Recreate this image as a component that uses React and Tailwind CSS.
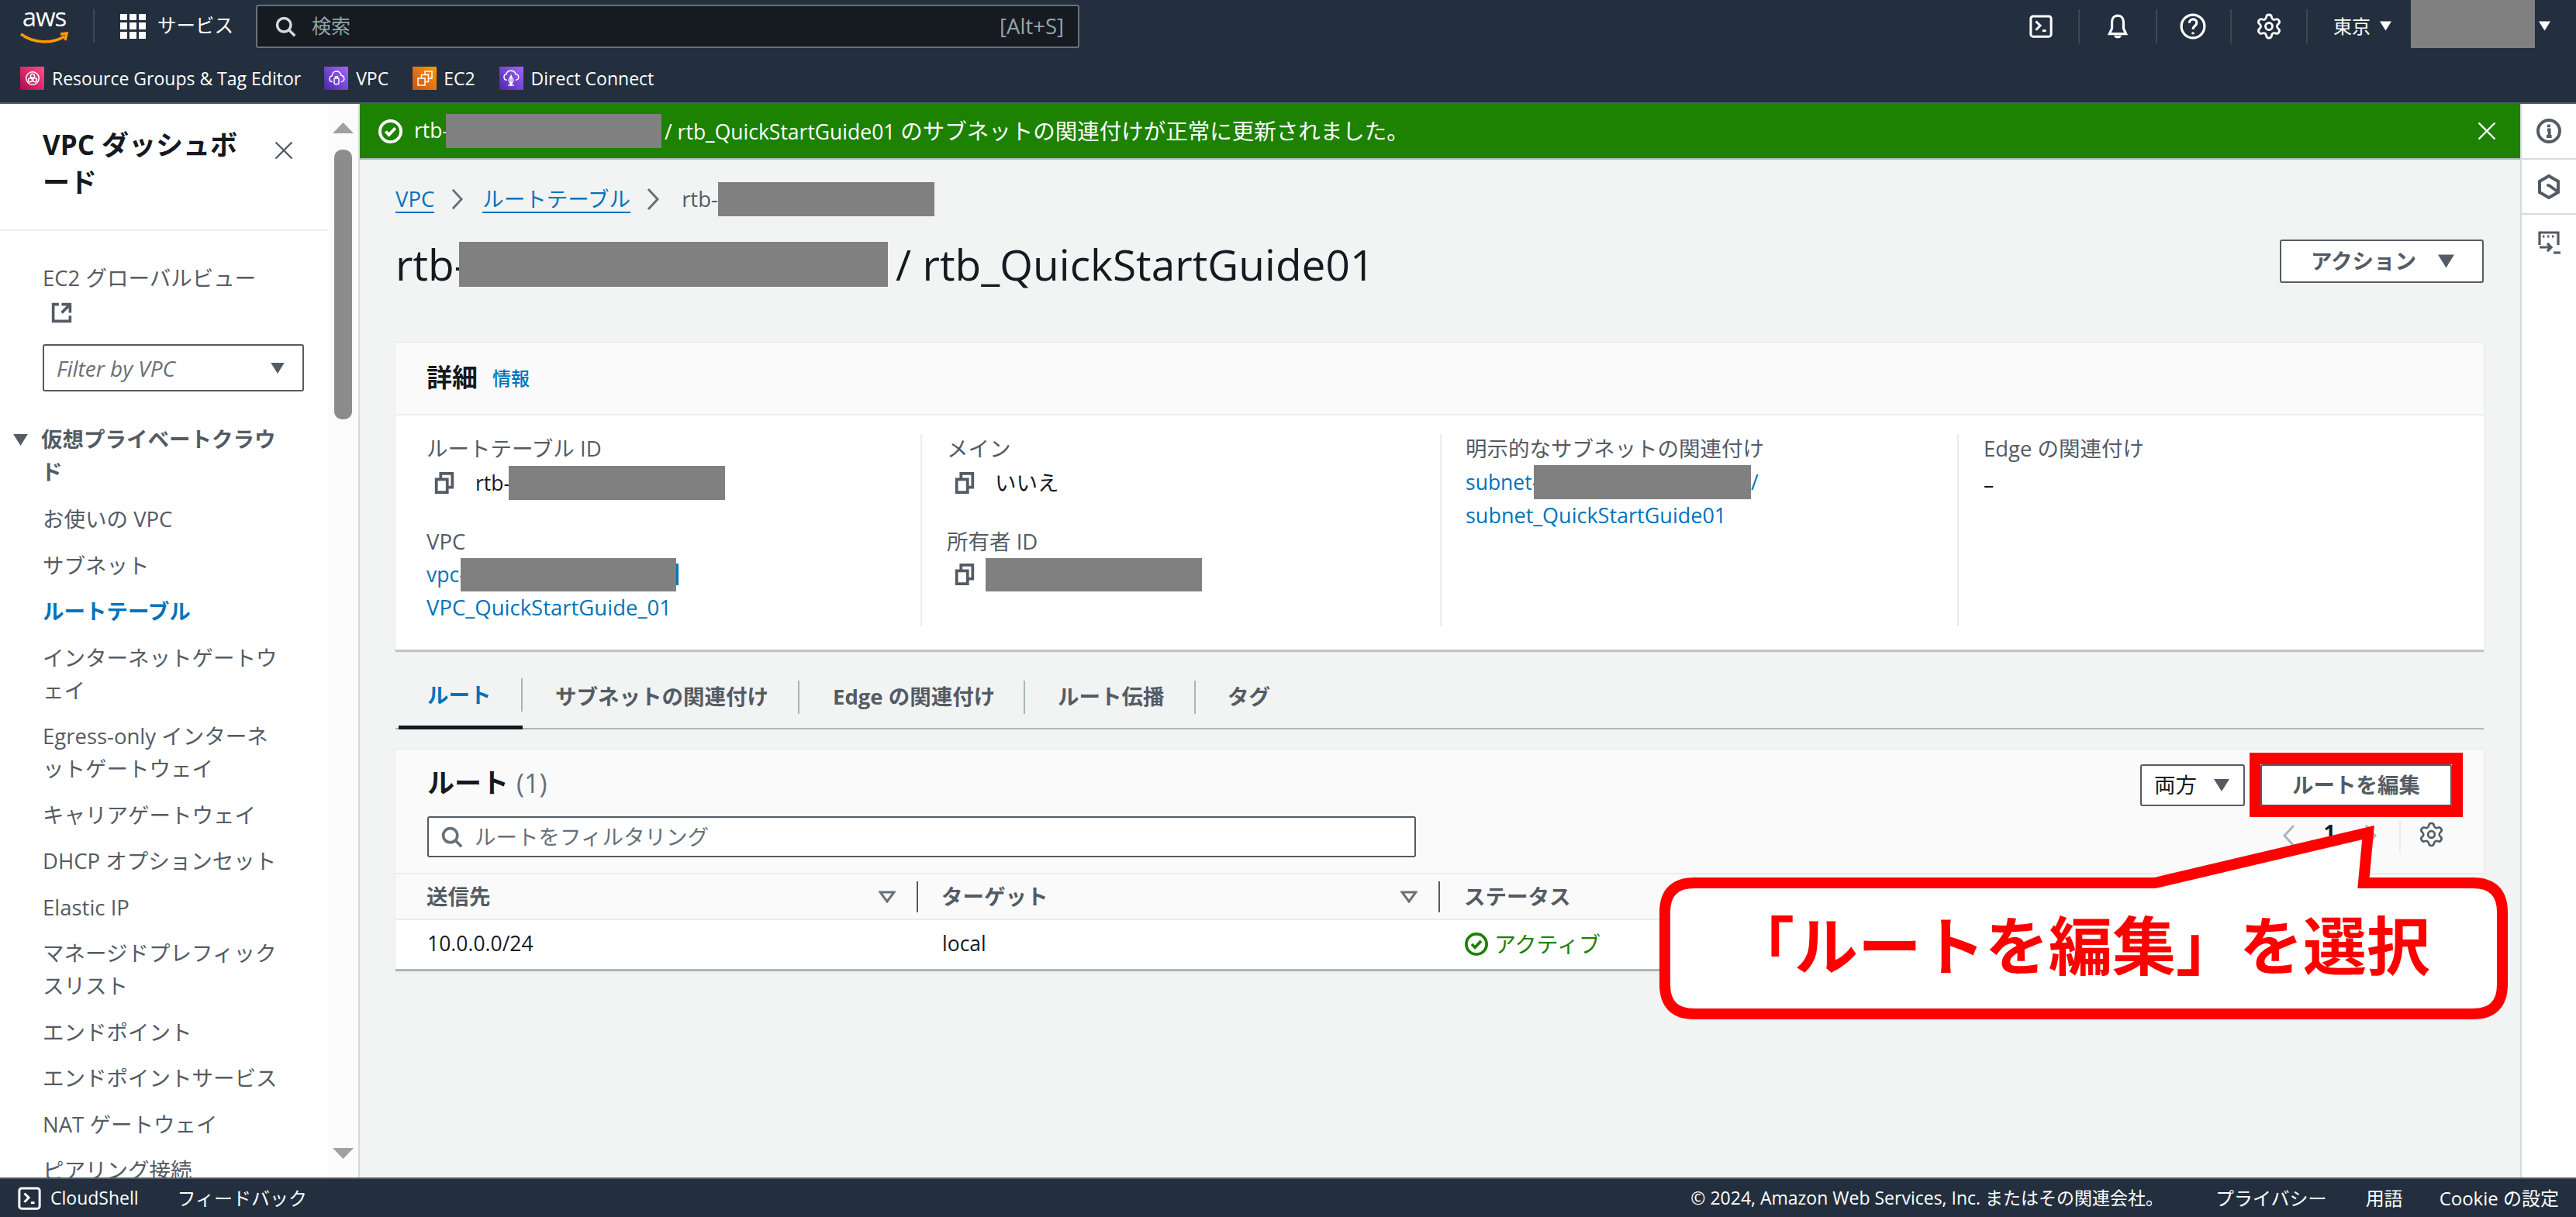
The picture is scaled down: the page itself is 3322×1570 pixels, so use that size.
import React from "react";
import { Settings } from "lucide-react";

const S = ({ c = "", w = 16, h, children, vb = "0 0 16 16", sw = 2 }) => (
  <svg viewBox={vb} width={w} height={h || w} className={"shrink-0 " + c} fill="none" stroke="currentColor" strokeWidth={sw}>
    {children}
  </svg>
);
const Grey = ({ w, h, c = "" }) => <span className={"inline-block shrink-0 bg-[#808080] " + c} style={{ width: w, height: h }} />;
const Tri = ({ w = 20, h = 16, c = "" }) => (
  <svg viewBox="0 0 20 16" width={w} height={h} className={"shrink-0 " + c} fill="currentColor"><path d="M0 0h20L10 16z" /></svg>
);
const Copy = ({ c = "" }) => (
  <S w={30} c={c}><path d="M2.5 5.5h7.5v9H2.5z" /><path d="M5.5 5V1.5h8v9.5H10.500" /></S>
);
const Term = ({ w = 30 }) => (
  <S w={w} sw={1.6}><rect x="1" y="1" width="14" height="14" rx="1.6" /><path d="m4.500 4.500 3 3-3 3" /><path d="M9 11h2.500" /></S>
);
const Check = ({ w = 30, sw = 2 }) => (
  <S w={w} sw={sw}><circle cx="8" cy="8" r="7" /><path d="m4.800 8 2.200 2.300 4.200-4.500" /></S>
);
const Search = ({ w = 30 }) => (
  <S w={w}><circle cx="7" cy="7" r="5" /><path d="m15 15-4.500-4.500" /></S>
);
const Close = ({ w = 28 }) => (
  <S w={w} sw={1.4}><path d="m2 2 12 12M14 2 2 14" /></S>
);
const Sort = () => (
  <svg viewBox="0 0 22 16" width="22" height="16" className="shrink-0 text-[#687078]" fill="none" stroke="currentColor" strokeWidth="3"><path d="M2 2h18L11 14z" /></svg>
);
const Chev = ({ w = 18, h = 30, c = "" }) => (
  <svg viewBox="0 0 18 30" width={w} height={h} className={"shrink-0 " + c} fill="none" stroke="currentColor" strokeWidth="3"><path d="m3 2 12 13L3 28" /></svg>
);
const HDiv = () => <span className="block h-[44px] w-[2px] shrink-0 bg-[#414750]" />;

const Fav = ({ bg, children, label, ml, gap }) => (
  <div className="flex items-center" style={{ marginLeft: ml }}>
    <span className="flex h-[30px] w-[31px] shrink-0 items-center justify-center text-white" style={{ background: bg }}>
      <S w={24} sw={1}>{children}</S>
    </span>
    <span className="whitespace-nowrap text-[23px] font-medium leading-none text-white" style={{ marginLeft: gap }}>{label}</span>
  </div>
);

const nav = [
  ["お使いの VPC"],
  ["サブネット"],
  ["ルートテーブル"],
  ["インターネットゲートウ", "ェイ"],
  ["Egress-only インターネ", "ットゲートウェイ"],
  ["キャリアゲートウェイ"],
  ["DHCP オプションセット"],
  ["Elastic IP"],
  ["マネージドプレフィック", "スリスト"],
  ["エンドポイント"],
  ["エンドポイントサービス"],
  ["NAT ゲートウェイ"],
  ["ピアリング接続"],
];

const Sidebar = () => (
  <aside className="flex h-full w-[464px] shrink-0 overflow-hidden border-r-2 border-[#d5dbdb] bg-white">
    <div className="h-full w-[423px] shrink-0 overflow-hidden text-[27.500px] leading-[42px] text-[#545b64]">
      <div className="flex h-[164px] items-start justify-between border-b-2 border-[#eaeded] pl-[55px] pr-[43px] pt-[29px]">
        <div className="whitespace-nowrap text-[35px] font-bold leading-[48px] text-[#16191f]">VPC ダッシュボ<br />ード</div>
        <span className="mt-[17px] text-[#545b64]"><Close w={28} /></span>
      </div>
      <div className="pl-[55px] pt-[40px]">
        <div className="whitespace-nowrap">EC2 グローバルビュー</div>
        <div className="ml-[10px] mt-[9px] text-[#545b64]">
          <S w={29}><path d="M14 8.010v-6H8M14.020 2 8 8.010M6 2.010H2v12h12v-3.990" /></S>
        </div>
        <div className="mt-[26px] flex h-[61px] w-[337px] items-center justify-between rounded-[3px] border-2 border-[#545b64] bg-white pl-[16px] pr-[22px]">
          <span className="text-[28px] italic text-[#687078]">Filter by VPC</span>
          <Tri w={20} h={14} />
        </div>
      </div>
      <div className="mt-[41px] flex font-bold">
        <Tri w={21} h={15} c="ml-[16px] mr-[16px] mt-[14px]" />
        <div className="whitespace-nowrap">仮想プライベートクラウ<br />ド</div>
      </div>
      <div className="mt-[19px] flex flex-col gap-[17.500px] pl-[55px]">
        {nav.map((l, i) => (
          <div key={i} className={"whitespace-nowrap " + (i === 2 ? "font-bold text-[#0073bb]" : "")}>
            {l.map((t, j) => <div key={j}>{t}</div>)}
          </div>
        ))}
      </div>
    </div>
    <div className="flex flex-1 flex-col items-center bg-[#fbfbfb] pt-[24px] text-[#a0a0a0]">
      <svg viewBox="0 0 27 14" width="27" height="14" fill="currentColor"><path d="M13.500 0 27 14H0z" /></svg>
      <div className="mt-[21px] h-[348px] w-[23px] rounded-[10px] bg-[#8c8c8c]" />
      <svg viewBox="0 0 27 14" width="27" height="14" fill="currentColor" className="mt-[940px]"><path d="M0 0h27L13.500 14z" /></svg>
    </div>
  </aside>
);

const Label = ({ children, c = "" }) => <div className={"h-[38px] whitespace-nowrap text-[27.500px] leading-[38px] text-[#545b64] " + c}>{children}</div>;
const Link = ({ children }) => <span className="whitespace-nowrap text-[#0073bb]">{children}</span>;

const Details = () => (
  <section className="h-[399px] border-b-[3px] border-[#bfc5c5] bg-white shadow-[0_0_2px_#d5dbdb]">
    <div className="flex h-[94px] items-center border-b-2 border-[#eaeded] bg-[#fafafa] pl-[40px]">
      <span className="-mt-[3px] text-[33px] font-bold text-[#16191f]">詳細</span>
      <span className="ml-[19px] text-[24px] font-medium text-[#0073bb]">情報</span>
    </div>
    <div className="flex pl-[40px] pt-[24px] text-[26.500px] leading-[42px] text-[#16191f]">
      <div className="h-[248px] w-[639px] border-r-2 border-[#eaeded]">
        <Label>ルートテーブル ID</Label>
        <div className="mt-[2px] flex h-[46px] items-center">
          <span className="ml-[8px] text-[#545b64]"><Copy /></span>
          <span className="ml-[25px] w-[43px]">rtb-</span>
          <Grey w={279} h={44} />
        </div>
        <Label c="mt-[34px]">VPC</Label>
        <div className="mt-[2px] flex h-[42px] items-center">
          <span className="w-[44px]"><Link>vpc-</Link></span>
          <Grey w={278} h={43} />
          <span className="h-[28px] w-[3px] bg-[#0073bb]" />
        </div>
        <div className="mt-[1px] text-[27.500px]"><Link>VPC_QuickStartGuide_01</Link></div>
      </div>
      <div className="h-[248px] w-[670px] border-r-2 border-[#eaeded] pl-[32px]">
        <Label>メイン</Label>
        <div className="mt-[2px] flex h-[46px] items-center">
          <span className="ml-[8px] text-[#545b64]"><Copy /></span>
          <span className="ml-[24px] text-[27.500px]">いいえ</span>
        </div>
        <Label c="mt-[34px]">所有者 ID</Label>
        <div className="mt-[2px] flex h-[42px] items-center">
          <span className="ml-[8px] text-[#545b64]"><Copy /></span>
          <Grey w={279} h={43} c="ml-[12px]" />
        </div>
      </div>
      <div className="h-[248px] w-[667px] border-r-2 border-[#eaeded] pl-[31px]">
        <Label>明示的なサブネットの関連付け</Label>
        <div className="mt-[2px] flex h-[44px] items-center">
          <span className="w-[88px]"><Link>subnet-</Link></span>
          <Grey w={280} h={44} />
          <Link>/</Link>
        </div>
        <div className="text-[27px]"><Link>subnet_QuickStartGuide01</Link></div>
      </div>
      <div className="pl-[32px]">
        <Label>Edge の関連付け</Label>
        <div className="mt-[6px]">–</div>
      </div>
    </div>
  </section>
);

const tabs = [
  ["ルート", 160, 37],
  ["サブネットの関連付け", 357, 42],
  ["Edge の関連付け", 291, 43],
  ["ルート伝播", 220, 42],
  ["タグ", 150, 41],
];

const Tabs = () => (
  <div className="mt-[19px] flex h-[81px] items-stretch border-b-2 border-[#aab7b8] pl-[4px]">
    {tabs.map(([t, w, p], i) => (
      <div key={t} className={"flex h-[81px] items-center justify-between pb-[3px] " + (i === 0 ? "border-b-[5px] border-[#16191f]" : "")} style={{ width: w, paddingLeft: p }}>
        <span className={"whitespace-nowrap text-[27.500px] font-bold " + (i === 0 ? "text-[#0073bb]" : "text-[#545b64]")}>{t}</span>
        {i < 4 && <span className="h-[43px] w-[2px] bg-[#aab7b8]" />}
      </div>
    ))}
  </div>
);

const Routes = () => (
  <section className="mt-[26px] h-[286px] border-b-[3px] border-[#aab7b8] bg-white shadow-[0_0_2px_#d5dbdb]">
    <div className="h-[161px] border-b-2 border-[#eaeded] bg-[#fafafa] pl-[41px] pr-[41px] pt-[19px]">
      <div className="flex h-[54px] items-center justify-between">
        <div className="-mt-[6px] flex items-baseline">
          <span className="text-[35px] font-bold text-[#16191f]">ルート</span>
          <span className="ml-[10px] text-[34px] text-[#687078]">(1)</span>
        </div>
        <div className="flex items-center">
          <div className="flex h-[54px] w-[135px] items-center justify-between rounded-[3px] border-2 border-[#545b64] bg-white pl-[16px] pr-[18px] text-[27.500px] text-[#16191f]">
            両方<Tri w={20} h={20} c="text-[#545b64]" />
          </div>
          <div className="ml-[20px] flex h-[54px] w-[247px] items-center justify-center rounded-[3px] border-2 border-[#545b64] bg-white text-[27.500px] font-bold text-[#545b64]">ルートを編集</div>
        </div>
      </div>
      <div className="mt-[13px] flex items-start">
        <div className="flex h-[53px] w-[1275px] items-center rounded-[3px] border-2 border-[#545b64] bg-white pl-[15px] text-[#687078]">
          <Search w={29} />
          <span className="ml-[15px] text-[27.500px] text-[#687078]">ルートをフィルタリング</span>
        </div>
        <div className="ml-auto mr-[9px] flex h-[53px] items-center text-[#aab7b8]">
          <Chev c="mt-[-3px] scale-x-[-1]" />
          <span className="ml-[36px] mt-[-12px] text-[27px] font-bold text-[#16191f]">1</span>
          <Chev c="ml-[36px] mt-[-3px]" />
          <span className="ml-[28px] h-[42px] w-[2px] bg-[#eaeded]" />
          <Settings size={35} strokeWidth={1.8} className="ml-[22px] mt-[-6px] text-[#545b64]" />
        </div>
      </div>
    </div>
    <div className="flex h-[59px] items-center border-b-2 border-[#eaeded] bg-[#fafafa] text-[27.500px] font-bold text-[#545b64]">
      <div className="flex h-[40px] w-[674px] items-center justify-between border-r-2 border-[#545b64] pl-[40px] pr-[27px]">送信先<Sort /></div>
      <div className="flex h-[40px] w-[673px] items-center justify-between border-r-2 border-[#545b64] pl-[30px] pr-[27px]">ターゲット<Sort /></div>
      <div className="pl-[31px]">ステータス</div>
    </div>
    <div className="flex h-[62px] items-center bg-white text-[26.500px] text-[#16191f]">
      <div className="w-[674px] pl-[41px]">10.0.0.0/24</div>
      <div className="w-[673px] pl-[31px]">local</div>
      <div className="flex items-center pl-[32px] text-[#1d8102]">
        <Check w={30} /><span className="ml-[8px] whitespace-nowrap text-[28px]">アクティブ</span>
      </div>
    </div>
  </section>
);

const RightPanel = () => (
  <aside className="flex h-full w-[72px] shrink-0 flex-col border-l-2 border-[#d5dbdb] bg-white text-[#545b64]">
    <div className="flex h-[72px] items-center justify-center border-b-2 border-[#d5dbdb]">
      <S w={32}><circle cx="8" cy="8" r="7" /><path d="M7 7.200h1.300v4M6.500 11.500h3.300" /><path d="M8 3.800v1.800" /></S>
    </div>
    <div className="flex h-[71px] items-center justify-center border-b-2 border-[#d5dbdb]">
      <S w={32}><path d="m8 1 6 3.500v7L8 15l-6-3.500v-7z" /><path d="m8 7 5.500 4" /><circle cx="7.500" cy="7" r="1" fill="currentColor" stroke="none" /></S>
    </div>
    <div className="flex justify-center pt-[20px]">
      <S w={32} sw={1.6}>
        <path d="M2 9.500V1.500h12v8" /><path d="M4 4h1.200M7 4h1.200M10 4h1.200" /><path d="M2 11h7M7 8.500 9.500 11 7 13.500" /><path d="M11 14.500h4.500" />
      </S>
    </div>
  </aside>
);

export default function App() {
  return (
    <div className="relative flex h-[1570px] w-[3322px] flex-col overflow-hidden bg-[#f2f3f3] font-['Open_Sans','Noto_Sans_CJK_JP',sans-serif]">
      <header className="h-[134px] shrink-0 border-b-2 border-[#545b64] bg-[#232f3e] text-white">
        <div className="flex h-[67px] items-center">
          <div className="relative ml-[26px] flex h-[44px] w-[62px] flex-col items-center">
            <span className="-mt-[9px] text-[33px] font-medium leading-[38px] tracking-[-1px]">aws</span>
            <svg viewBox="0 0 62 16" width="62" height="16" className="absolute bottom-[-1px] left-0" fill="none" stroke="#ff9900" strokeWidth="3.500">
              <path d="M1 3c16 12 40 13 56 3M52 3l8-1-2 9" />
            </svg>
          </div>
          <span className="ml-[32px] h-[43px] w-[2px] bg-[#414750]" />
          <div className="ml-[33px] grid h-[32px] w-[33px] grid-cols-3 gap-[3px]">
            {Array.from({ length: 9 }).map((_, i) => <span key={i} className="bg-white" />)}
          </div>
          <span className="ml-[15px] text-[24.500px] leading-none">サービス</span>
          <div className="ml-[29px] flex h-[56px] w-[1062px] items-center justify-between rounded-[3px] border-2 border-[#687078] bg-[#161b22] pl-[22px] pr-[18px] text-[#95a5a6]">
            <div className="flex items-center">
              <span className="text-[#d5dbdb]"><Search w={28} /></span>
              <span className="ml-[20px] text-[25px] leading-none">検索</span>
            </div>
            <span className="text-[27.500px]">[Alt+S]</span>
          </div>
          <div className="ml-[1225px] flex items-center">
            <Term w={30} />
            <span className="ml-[33px]"><HDiv /></span>
            <S w={34} c="ml-[32px]" sw={1.500}>
              <path d="M8 1.500c-2 0-3.500 1.500-3.500 3.800v4L3 12.500h10L11.500 9.300v-4C11.500 3 10 1.500 8 1.500z" /><path d="M6.500 13.500c.2 1.300 2.800 1.300 3 0" />
            </S>
            <span className="ml-[32px]"><HDiv /></span>
            <S w={34} c="ml-[29px]" sw={1.500}>
              <circle cx="8" cy="8" r="7" /><path d="M5.800 6c0-3 4.500-3 4.500-.200 0 2-2.300 1.900-2.300 4M8 11.500v1.300" />
            </S>
            <span className="ml-[31px]"><HDiv /></span>
            <Settings size={36} strokeWidth={1.9} className="ml-[30px]" />
            <span className="ml-[30px]"><HDiv /></span>
            <span className="ml-[33px] text-[24px] leading-none">東京</span>
            <Tri w={15} h={17} c="ml-[12px]" />
            <Grey w={160} h={62} c="-mt-[5px] ml-[25px]" />
            <Tri w={15} h={17} c="ml-[5px]" />
          </div>
        </div>
        <div className="flex h-[65px] items-center pl-[26px] pt-[3px]">
          <Fav bg="linear-gradient(45deg,#b0084d,#ff4f8b)" label="Resource Groups & Tag Editor" ml={0} gap={10}>
            <circle cx="8" cy="8" r="5.500" /><circle cx="8" cy="6" r="1.700" /><circle cx="6" cy="9.500" r="1.700" /><circle cx="10" cy="9.500" r="1.700" />
          </Fav>
          <Fav bg="linear-gradient(45deg,#4d27a8,#a166ff)" label="VPC" ml={30} gap={10}>
            <path d="M4.500 11C2.500 11 2 9.500 2 8.500 2 7 3 6 4 6c.2-2.500 2-4 4-4s3.500 1.500 4 3.500c1.500.2 2.500 1.500 2.500 3 0 1.300-1 2.500-2.500 2.500" /><rect x="6" y="8" width="4" height="5" rx="1" /><path d="M7 8V6.500h2V8" />
          </Fav>
          <Fav bg="linear-gradient(45deg,#c8511b,#ff9900)" label="EC2" ml={31} gap={9}>
            <rect x="2" y="8" width="6" height="6" /><path d="M5 8V5h6v6H8" /><path d="M8 5V2h6v6h-3" />
          </Fav>
          <Fav bg="linear-gradient(45deg,#4d27a8,#a166ff)" label="Direct Connect" ml={31} gap={10}>
            <path d="M4.500 9.500C2.500 9.500 2 8 2 7c0-1.500 1-2.500 2-2.500C4.300 2.500 6 1.500 8 1.500s3.500 1 4 3c1.500.2 2.500 1.300 2.500 2.500s-1 2.500-2.500 2.500" /><path d="M8 5v9M5.500 14h5M6 9.500 8 6l2 3.500-2 4.500z" />
          </Fav>
        </div>
      </header>

      <div className="flex min-h-0 flex-1">
        <Sidebar />
        <main className="min-w-0 flex-1">
          <div className="flex h-[72px] items-center border-b-2 border-[#aab7b8] bg-[#1d8102] pl-[24px] pr-[29px] text-[26.500px] text-white">
            <Check w={31} />
            <span className="ml-[15px] w-[41px]">rtb-</span>
            <Grey w={278} h={44} />
            <span className="ml-[4px] whitespace-nowrap">/ rtb_QuickStartGuide01 <span className="text-[28.500px]">のサブネットの関連付けが正常に更新されました。</span></span>
            <span className="ml-auto"><Close w={28} /></span>
          </div>
          <div className="pl-[46px] pr-[47px]">
            <div className="mt-[29px] flex h-[44px] items-center text-[27.500px]">
              <span className="border-b-2 border-[#0073bb] leading-[33px] text-[#0073bb]">VPC</span>
              <Chev w={17} h={30} c="ml-[21px] text-[#687078]" />
              <span className="ml-[24px] border-b-2 border-[#0073bb] leading-[33px] text-[#0073bb]">ルートテーブル</span>
              <Chev w={20} h={30} c="ml-[19px] text-[#687078]" />
              <span className="ml-[27px] w-[47px] text-[#545b64]">rtb-</span>
              <Grey w={279} h={44} />
            </div>
            <div className="mt-[33px] flex h-[58px] items-center">
              <span className="w-[82px] text-[55px] text-[#16191f]">rtb-</span>
              <Grey w={553} h={58} />
              <span className="ml-[10px] whitespace-nowrap text-[55px] text-[#16191f]">/ rtb_QuickStartGuide01</span>
              <div className="-mt-[8px] ml-auto flex h-[56px] w-[263px] items-center justify-between rounded-[3px] border-2 border-[#545b64] bg-white pl-[38px] pr-[36px] text-[27.500px] font-bold text-[#545b64]">
                アクション<Tri w={21} h={18} />
              </div>
            </div>
            <div className="mt-[72px]"><Details /></div>
            <Tabs />
            <Routes />
          </div>
        </main>
        <RightPanel />
      </div>

      <footer className="flex h-[51px] shrink-0 items-center border-t-2 border-[#545b64] bg-[#232f3e] pl-[23px] pr-[22px] text-[23px] leading-none text-white">
        <Term w={30} />
        <span className="ml-[12px] font-medium">CloudShell</span>
        <span className="ml-[50px] text-[24px]">フィードバック</span>
        <span className="ml-auto whitespace-nowrap">© 2024, Amazon Web Services, Inc. またはその関連会社。</span>
        <span className="ml-[67px] text-[24px]">プライバシー</span>
        <span className="ml-[50px] text-[24px]">用語</span>
        <span className="ml-[47px] text-[24px]">Cookie の設定</span>
      </footer>

      {/* annotation overlays */}
      <div className="absolute left-[2901px] top-[971px] h-[83px] w-[275px] border-x-[14px] border-y-[15px] border-[#ff0000]" />
      <svg className="absolute left-[2130px] top-[1050px]" width="1114" height="275" viewBox="2130 1050 1114 275" fill="#ffffff" stroke="#ff0000" strokeWidth="14" strokeLinejoin="miter" strokeMiterlimit="10">
        <path d="M2185 1139H2779L3054 1074 3048 1139H3189Q3227 1139 3227 1177V1270Q3227 1308 3189 1308H2185Q2147 1308 2147 1270V1177Q2147 1139 2185 1139Z" />
      </svg>
      <div className="absolute left-[2232px] top-[1160px] whitespace-nowrap text-[82px] font-bold leading-[118px] text-[#ff0000]">「ルートを編集」を選択</div>
    </div>
  );
}
